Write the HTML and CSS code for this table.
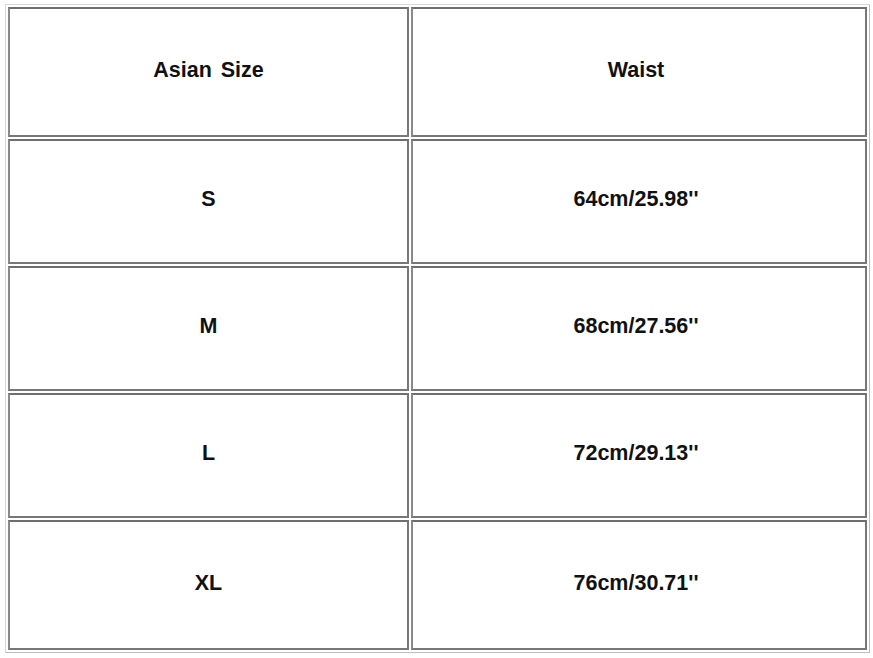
FILE: index.html
```html
<!DOCTYPE html>
<html>
<head>
<meta charset="utf-8">
<link rel="stylesheet" href="styles.css">
</head>
<body>
<table class="size-table">
  <tr class="head-row"><td class="c1"><span class="head-text">Asian Size</span></td><td class="c2">Waist</td></tr>
  <tr><td class="c1">S</td><td class="c2">64cm/25.98''</td></tr>
  <tr><td class="c1">M</td><td class="c2">68cm/27.56''</td></tr>
  <tr><td class="c1">L</td><td class="c2">72cm/29.13''</td></tr>
  <tr class="last-row"><td class="c1">XL</td><td class="c2">76cm/30.71''</td></tr>
</table>
</body>
</html>
```
FILE: styles.css
```css
html, body {
  margin: 0;
  padding: 0;
  background: #ffffff;
}
body {
  padding: 4px 0 0 5px;
}
.size-table {
  border-collapse: separate;
  border-spacing: 2px;
  border: 1px solid #d8d8d8;
  border-right-color: #bdbdbd;
  border-bottom-color: #bdbdbd;
  font-family: "Liberation Sans", Arial, sans-serif;
  font-weight: bold;
  font-size: 21.5px;
  color: #111111;
}
.size-table td {
  border: 2px solid #777777;
  border-top-color: #6e6e6e;
  border-left-color: #8a8a8a;
  text-align: center;
  vertical-align: middle;
  height: 117px;
  padding: 0 0 4px 0;
}
.head-row td {
  height: 122px;
}
.last-row td {
  height: 122px;
}
.head-text {
  word-spacing: 3px;
}
.c1 {
  width: 397px;
}
.c2 {
  width: 452px;
  text-indent: -6px;
}
```
